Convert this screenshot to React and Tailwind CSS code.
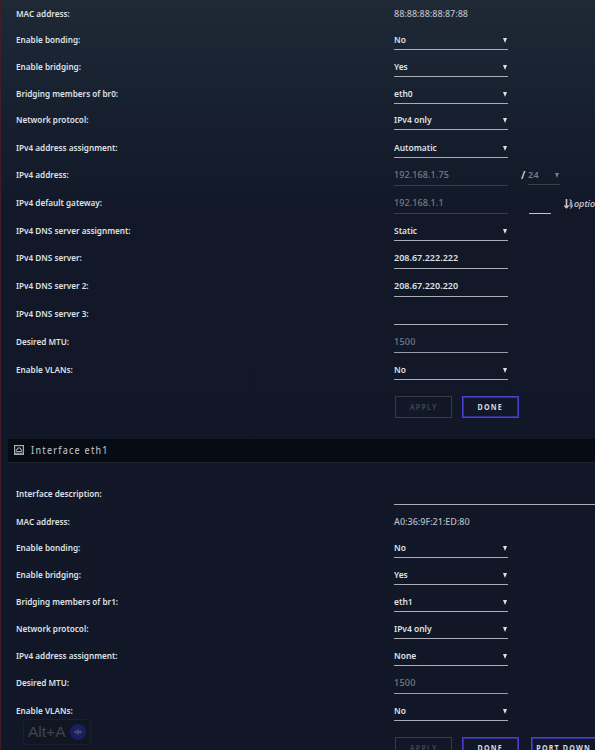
import clsx from "clsx";

const eth0 = [
  { label: "MAC address:", value: "88:88:88:88:87:88", type: "text", height: "h-[24px]" },
  { label: "Enable bonding:", value: "No", type: "select", height: "h-[26px]" },
  { label: "Enable bridging:", value: "Yes", type: "select", height: "h-[27px]" },
  { label: "Bridging members of br0:", value: "eth0", type: "select", height: "h-[27px]" },
  { label: "Network protocol:", value: "IPv4 only", type: "select", height: "h-[26px]" },
  { label: "IPv4 address assignment:", value: "Automatic", type: "select", height: "h-[28px]" },
  { label: "IPv4 address:", value: "192.168.1.75", type: "disabled", height: "h-[28px]", extra: "mask" },
  { label: "IPv4 default gateway:", value: "192.168.1.1", type: "disabled", height: "h-[28px]", extra: "metric" },
  { label: "IPv4 DNS server assignment:", value: "Static", type: "select", height: "h-[27px]" },
  { label: "IPv4 DNS server:", value: "208.67.222.222", type: "input", height: "h-[28px]" },
  { label: "IPv4 DNS server 2:", value: "208.67.220.220", type: "input", height: "h-[28px]" },
  { label: "IPv4 DNS server 3:", value: "", type: "input", height: "h-[28px]" },
  { label: "Desired MTU:", value: "1500", type: "placeholder", height: "h-[28px]" },
  { label: "Enable VLANs:", value: "No", type: "select", height: "h-[27px]" },
];

const eth1 = [
  { label: "Interface description:", value: "", type: "wide", height: "h-[42px]" },
  { label: "MAC address:", value: "A0:36:9F:21:ED:80", type: "text", height: "h-[27px]" },
  { label: "Enable bonding:", value: "No", type: "select", height: "h-[26px]" },
  { label: "Enable bridging:", value: "Yes", type: "select", height: "h-[27px]" },
  { label: "Bridging members of br1:", value: "eth1", type: "select", height: "h-[27px]" },
  { label: "Network protocol:", value: "IPv4 only", type: "select", height: "h-[27px]" },
  { label: "IPv4 address assignment:", value: "None", type: "select", height: "h-[27px]" },
  { label: "Desired MTU:", value: "1500", type: "placeholder", height: "h-[28px]" },
  { label: "Enable VLANs:", value: "No", type: "select", height: "h-[27px]" },
];

const Arrow = () => (
  <svg viewBox="0 0 4 5" className="w-[4px] h-[5px] mr-px fill-current">
    <path d="M0 0h4L2 5z" />
  </svg>
);

const Mask = () => (
  <div className="flex items-end h-full ml-[13px] shrink-0">
    <span className="text-[11px] leading-[22px] w-[7px] text-[#d0d3d8]">/</span>
    <div className="w-[32px] h-[21px] mb-px pt-[2px] border-b border-[#373d49] flex items-center justify-between text-[#777c86]">
      <span className="tracking-[0.3px]">24</span>
      <Arrow />
    </div>
  </div>
);

const Metric = () => (
  <div className="flex items-end h-full ml-[21px] shrink-0">
    <div className="w-[22px] shrink-0 border-b border-[#c3c6ca]" />
    <svg viewBox="0 0 9 10" className="w-[9px] h-[10px] ml-[13px] mb-[5px] shrink-0 fill-none stroke-[#c8cbd1]">
      <path d="M2.500 0v8.500" strokeWidth="1.6" />
      <path d="M.4 6.500l2.100 2.200 2.100-2.200" strokeWidth="1.5" />
      <path d="M5.500 1h1.500v3M5.500 4h3" strokeWidth="1" />
      <circle cx="7" cy="6.300" r="1.200" strokeWidth="1" />
      <path d="M8.200 6.300c0 2-.7 2.700-2 3" strokeWidth="1" />
    </svg>
    <i className="ml-px leading-[21px] whitespace-nowrap font-medium text-[#d0d3d8]">optional metric</i>
  </div>
);

const Row = ({ row }) => (
  <div className={clsx("flex items-end pl-[14.5px]", row.height)}>
    <div
      className={clsx(
        "w-[378.5px] shrink-0 text-[9.5px] leading-[21px]",
        (row.type === "disabled" || row.type === "input" || row.type === "placeholder" || row.type === "wide") && "pb-px"
      )}
    >
      <span className="inline-block origin-left scale-x-[0.86]">{row.label}</span>
    </div>
    <div
      className={clsx(
        "h-[21px] shrink-0 flex items-center justify-between whitespace-nowrap",
        row.type === "wide" ? "w-[220px]" : "w-[114px]",
        row.type === "select" && "pt-[2px]",
        row.type === "text" && "font-medium text-[#b9bdc5]",
        row.type === "disabled" && "border-b border-[#373d49] font-medium text-[#777c86] tracking-[0.1px]",
        row.type === "placeholder" && "border-b border-[#989da4] font-medium text-[#777c86] tracking-[0.25px]",
        (row.type === "select" || row.type === "input" || row.type === "wide") && "border-b border-[#aaaeb4]"
      )}
    >
      <span className={clsx("inline-block origin-left", row.type === "select" && "text-[9.5px] scale-x-[0.89]")}>{row.value}</span>
      {row.type === "select" && <Arrow />}
    </div>
    {row.extra === "mask" && <Mask />}
    {row.extra === "metric" && <Metric />}
  </div>
);

const Button = ({ children, disabled, wide }) => (
  <button
    disabled={disabled}
    className={clsx(
      "h-[22px] shrink-0 text-[8px] leading-none font-bold tracking-[1.3px] whitespace-nowrap flex items-center justify-center border",
      wide ? "w-[66px]" : "w-[57px]",
      disabled
        ? "border-[#373b43] text-[#3d424d]"
        : "border-[#4b3fd2] text-[#d8dae0] shadow-[inset_0_0_0_1px_#342d98]"
    )}
  >
    <span className="inline-block scale-x-[0.89]">{children}</span>
  </button>
);

const Buttons = ({ children }) => (
  <div className="flex pl-[394px] mt-[16px]">
    <Button disabled>APPLY</Button>
    <div className="w-[10px] shrink-0" />
    <Button>DONE</Button>
    <div className="w-[12px] shrink-0" />
    {children}
  </div>
);

const SectionTitle = () => (
  <div className="h-[24px] ml-[7px] mt-[21px] pl-[6px] bg-[#070b14] border-b border-[#1c2229] flex items-center text-[#b5b8bf]">
    <svg viewBox="0 0 10 10" className="w-[10px] h-[10px] mb-px fill-none stroke-[#a5a9b0]">
      <rect x=".6" y=".6" width="8.800" height="8.800" strokeWidth="1.2" />
      <path d="M2.200 6.500V4.500h1.300V3h3v1.500h1.300v2z" strokeWidth="1" />
      <path d="M1 8.200h8" strokeWidth="1" />
    </svg>
    <span className="ml-[6.5px] text-[10px] font-medium tracking-[1.4px] inline-block origin-left scale-x-[0.89]">Interface eth1</span>
  </div>
);

const Shortcut = () => (
  <div className="absolute left-[22px] top-[719px] w-[68px] h-[26px] rounded-[3px] border border-[#1b202c] bg-[#111722] flex items-center pl-[4px] text-[#3f444f]">
    <span className="font-['Liberation_Sans',sans-serif] font-normal text-[15.5px] leading-none">Alt+A</span>
    <svg viewBox="0 0 16 16" className="w-[16px] h-[16px] ml-[5px]">
      <circle cx="8" cy="8" r="8" fill="#18205f" />
      <path d="M4 8h8M6 6.500v3M8 5v6M10 6.500v3" stroke="#555b78" strokeWidth="1" />
    </svg>
  </div>
);

const App = () => {
  return (
    <div className="relative w-[595px] h-[750px] overflow-hidden border-l border-[#431c29] bg-[linear-gradient(#1f2835_0px,#182130_95px,#121827_210px,#111726_750px)] font-['Noto_Sans',sans-serif] text-[9px] font-semibold text-[#dfe1e5]">
      {eth0.map((row) => (
        <Row key={row.label} row={row} />
      ))}
      <Buttons />

      <SectionTitle />

      {eth1.map((row) => (
        <Row key={row.label} row={row} />
      ))}
      <Buttons>
        <Button wide>PORT DOWN</Button>
      </Buttons>

      <Shortcut />
    </div>
  );
};

export default App;
